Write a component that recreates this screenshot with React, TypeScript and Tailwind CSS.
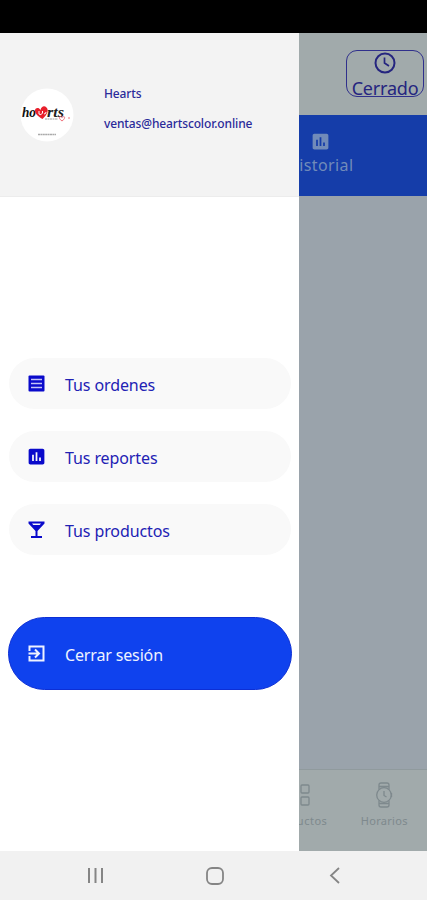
import { ReactNode } from "react";
import { MdInsertChart } from "react-icons/md";

interface DrawerItemProps {
  icon: ReactNode;
  label: string;
}

function DrawerItem({ icon, label }: DrawerItemProps) {
  return (
    <button className="flex h-[51px] w-full items-center gap-[18px] rounded-full bg-[#f9f9f9] pl-[17px] text-[#0a0acb]">
      {icon}
      <span className="mt-[2px] text-[16px] tracking-[-0.1px] text-[#2222b4]">{label}</span>
    </button>
  );
}

function OrdersIcon() {
  return (
    <svg width="21" height="21" viewBox="0 0 21 21">
      <rect x="2.500" y="2.500" width="16" height="16" rx="1" fill="currentColor" />
      <path d="M5 6.500h11M5 10.500h11M5 14.500h11" stroke="#c4c4f6" strokeWidth="1.500" />
    </svg>
  );
}

function GlassIcon() {
  return (
    <svg width="21" height="21" viewBox="0 0 21 21" fill="currentColor">
      <path d="M2.500 2.500h16v2l-7 7.500v5h4.500v2H5v-2h4.500v-5l-7-7.500zM6 4.600l1.300 1.500h6.400L15 4.600z" fillRule="evenodd" />
    </svg>
  );
}

function LogoutIcon() {
  return (
    <svg width="21" height="21" viewBox="0 0 21 21" fill="none" stroke="currentColor" strokeWidth="2">
      <path d="M3.500 8V3.500h14v14h-14V13M2.500 10.500h10M9 6.500l4 4-4 4" />
    </svg>
  );
}

function ClockIcon() {
  return (
    <svg className="shrink-0" width="22" height="22" viewBox="0 0 22 22" fill="none" stroke="currentColor" strokeWidth="2">
      <circle cx="11" cy="11" r="9.500" />
      <path d="M10.500 5.500V11l4.500 3" strokeWidth="1.700" />
    </svg>
  );
}

function BrandLogo() {
  return (
    <svg width="54" height="54" viewBox="0 0 54 54">
      <circle cx="27" cy="27" r="26.500" fill="#fff" />
      <g fontFamily="Liberation Serif, serif" fontStyle="italic" fontWeight="bold" fontSize="15">
        <text x="2" y="29" textLength="14" lengthAdjust="spacingAndGlyphs" fill="#111">ho</text>
        <text x="27" y="29" textLength="17" lengthAdjust="spacingAndGlyphs" fill="#222">rts</text>
      </g>
      <path
        d="M22.500 31c-5-3-8-6-7.500-9 .5-2.500 4-3 5.500 0 1-4 4-4.500 6-2.500 2.500 2.500 1 7-4 11.500z"
        fill="#e8202c"
      />
      <path d="M19 23v3q2 2 3.500-1v-2M24 26q2 0 2-2" stroke="#fff" fill="none" />
      <path d="M25 31h13" stroke="#888" strokeWidth=".8" strokeDasharray="2 .5" />
      <path d="M42 33c-4-2.500-3-6 0-3.500 3-2.500 4 1 0 3.500zM49 29v2" stroke="#ef6f7a" strokeWidth="1" fill="none" />
      <path d="M18 46.500h18" stroke="#aaa" strokeWidth="1.300" strokeDasharray="2 .4" />
    </svg>
  );
}

function GridIcon() {
  return (
    <svg width="22" height="22" viewBox="0 0 22 22" fill="none" stroke="currentColor" strokeWidth="1.300">
      <rect x="1" y="1" width="8" height="8" rx="1" />
      <rect x="13" y="1" width="8" height="8" rx="1" />
      <rect x="1" y="13" width="8" height="8" rx="1" />
      <rect x="13" y="13" width="8" height="8" rx="1" />
    </svg>
  );
}

function WatchIcon() {
  return (
    <svg width="18" height="26" viewBox="0 0 18 26" fill="none" stroke="currentColor" strokeWidth="1.300">
      <circle cx="9" cy="13" r="7.300" />
      <path d="M4 7.500V3q0-2 2-2h6q2 0 2 2v4.500M4 18.500V23q0 2 2 2h6q2 0 2-2v-4.500M4.500 4.500h9M4.500 21.500h9M9 9v4.500l2.500 1.500M16.500 11v4" />
    </svg>
  );
}

function StorePage() {
  return (
    <div className="flex h-full flex-col bg-[#9aa3ab]">
      <header className="flex h-[82px] justify-end bg-[#a1aaab] pr-[3px] pt-[17px]">
        <button className="flex h-[47px] w-[78px] flex-col items-center rounded-[11px] border border-[#30308c] pt-[1px] text-[#25257f]">
          <ClockIcon />
          <span className="mt-[2px] text-[18px] leading-[24px] tracking-[-0.2px]">Cerrado</span>
        </button>
      </header>
      <nav className="grid h-[81px] grid-cols-2 bg-[#153da9] text-[#718bb9]">
        <div />
        <div className="flex flex-col items-center pt-[16px]">
          <MdInsertChart size={21} />
          <span className="mt-[1px] text-[16px] leading-[24px] tracking-[0.4px]">Historial</span>
        </div>
      </nav>
      <main className="flex-1" />
      <footer className="grid h-[82px] grid-cols-5 border-t border-[#909a9d] bg-[#a1aaab] text-[#7e898d]">
        <div className="col-start-4 flex flex-col items-center pt-[14px]">
          <GridIcon />
          <span className="mt-[7px] text-[11px] leading-[16px] tracking-[0.5px]">Productos</span>
        </div>
        <div className="flex flex-col items-center pt-[12px]">
          <WatchIcon />
          <span className="mt-[5px] text-[11px] leading-[16px] tracking-[0.3px]">Horarios</span>
        </div>
      </footer>
    </div>
  );
}

function Drawer() {
  return (
    <aside className="absolute inset-y-0 left-0 w-[299px] bg-white">
      <div className="flex h-[164px] items-center border-b border-[#ececec] bg-[#f3f3f3] pl-[20px]">
        <BrandLogo />
        <div className="ml-[30px] mt-[-12px] flex flex-col gap-[12px] text-[12px] font-medium leading-[18px] tracking-[-0.13px] text-[#2a2a9a]">
          <span>Hearts</span>
          <span>ventas@heartscolor.online</span>
        </div>
      </div>
      <div className="flex flex-col gap-[22px] pl-[9px] pr-[8px] pt-[161px]">
        <DrawerItem icon={<OrdersIcon />} label="Tus ordenes" />
        <DrawerItem icon={<MdInsertChart size={21} />} label="Tus reportes" />
        <DrawerItem icon={<GlassIcon />} label="Tus productos" />
      </div>
      <div className="pl-[8px] pr-[7px] pt-[62px]">
        <button className="flex h-[73px] w-full items-center gap-[18px] rounded-full border border-[#0d2fd5] bg-[#0f42ee] pl-[17px] text-[#eef2ff]">
          <LogoutIcon />
          <span className="mt-[2px] text-[16px] tracking-[-0.15px]">Cerrar sesión</span>
        </button>
      </div>
    </aside>
  );
}

function SystemBar() {
  return (
    <div className="flex h-[49px] items-center bg-[#f1f1f1] text-[#858585]">
      <svg className="ml-[87px]" width="17" height="17" stroke="currentColor" strokeWidth="2">
        <path d="M2 1v15M8.500 1v15M15 1v15" />
      </svg>
      <svg className="ml-[102px]" width="18" height="18" fill="none" stroke="currentColor" strokeWidth="1.800">
        <rect x="1" y="1" width="16" height="16" rx="5" />
      </svg>
      <svg className="ml-[105px]" width="12" height="17" fill="none" stroke="currentColor" strokeWidth="1.800">
        <path d="M10 1 2 8.500l8 7.500" />
      </svg>
    </div>
  );
}

export default function App() {
  return (
    <div className="flex h-[900px] w-[427px] flex-col overflow-hidden font-['Noto_Sans',sans-serif]">
      <div className="h-[33px] bg-black" />
      <div className="relative h-[818px]">
        <StorePage />
        <Drawer />
      </div>
      <SystemBar />
    </div>
  );
}
